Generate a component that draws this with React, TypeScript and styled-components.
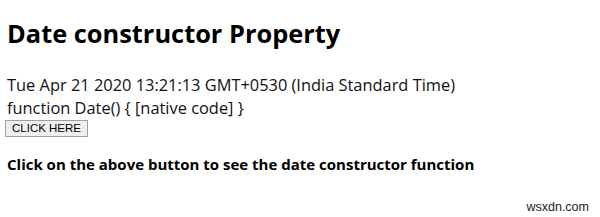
import styled, { createGlobalStyle } from "styled-components";

const GlobalStyle = createGlobalStyle`
  html, body {
    margin: 0;
    padding: 0;
    background: #ffffff;
  }
  body {
    width: 600px;
    height: 217px;
    overflow: hidden;
    font-family: "Open Sans", "Noto Sans", sans-serif;
    color: #000;
  }
`;

const Page = styled.div`
  position: relative;
  width: 600px;
  height: 217px;
  padding: 18px 7px 0;
  box-sizing: border-box;
`;

const Title = styled.h1`
  margin: 0 0 25px;
  font-size: 25.4px;
  font-weight: 700;
  line-height: 30px;
`;

const Line = styled.div`
  font-size: 16.4px;
  line-height: 23px;
  color: #111;
`;

const Button = styled.button`
  display: block;
  margin: 1px 0 0 -2px;
  padding: 1px 6px;
  font-family: "Liberation Sans", Arial, sans-serif;
  font-size: 11.5px;
  line-height: 13px;
  color: #000;
  background: #efefef;
  border: 1px solid #a0a0a0;
  border-radius: 0;
`;

const Note = styled.p`
  margin: 17px 0 0;
  font-size: 15px;
  font-weight: 700;
  line-height: 20px;
`;

const Watermark = styled.span`
  position: absolute;
  right: 11px;
  bottom: 3px;
  font-family: "Liberation Sans", Arial, sans-serif;
  font-size: 12.5px;
  color: #222;
`;

export default function App() {
  return (
    <>
      <GlobalStyle />
      <Page>
        <Title>Date constructor Property</Title>
        <Line>Tue Apr 21 2020 13:21:13 GMT+0530 (India Standard Time)</Line>
        <Line>function Date() {"{"} [native code] {"}"}</Line>
        <Button>CLICK HERE</Button>
        <Note>Click on the above button to see the date constructor function</Note>
        <Watermark>wsxdn.com</Watermark>
      </Page>
    </>
  );
}
